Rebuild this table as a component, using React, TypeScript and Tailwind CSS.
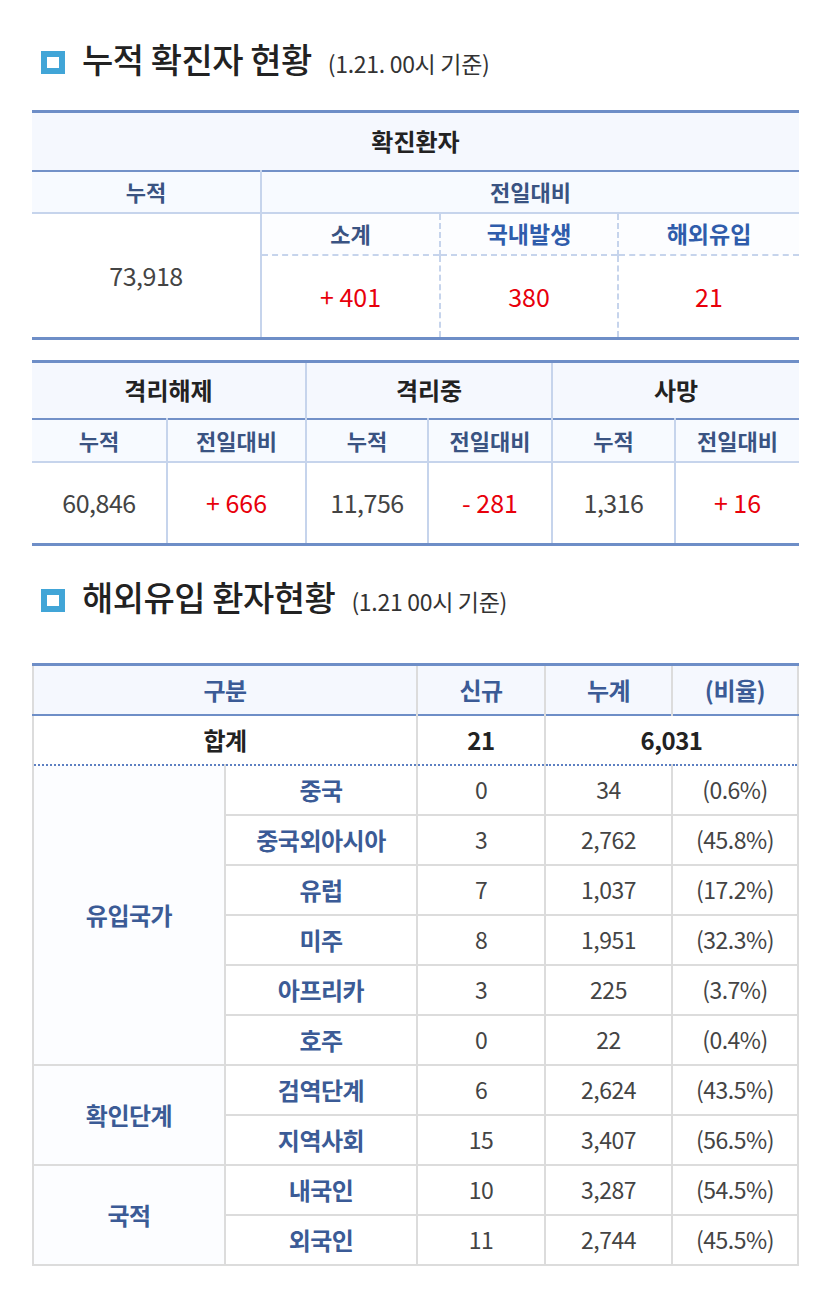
const font = { fontFamily: '"Noto Sans CJK KR", "Noto Sans", sans-serif' }

function SectionTitle({ title, note }: { title: string; note: string }) {
  return (
    <div className="flex h-[48px] items-center">
      <span className="ml-[9px] box-border h-[23px] w-[24px] border-[6px] border-[#41a5d7] bg-white" />
      <div className="ml-[17px] flex items-baseline pb-[8px]">
        <h2 className="text-[34px] font-medium tracking-[-0.5px] text-[#222]">{title}</h2>
        <span className="ml-[16px] text-[23px] tracking-[-0.3px] text-[#333]">{note}</span>
      </div>
    </div>
  )
}

const importRows = [
  { group: "유입국가", span: 6, label: "중국", n: "0", total: "34", rate: "(0.6%)" },
  { label: "중국외아시아", n: "3", total: "2,762", rate: "(45.8%)" },
  { label: "유럽", n: "7", total: "1,037", rate: "(17.2%)" },
  { label: "미주", n: "8", total: "1,951", rate: "(32.3%)" },
  { label: "아프리카", n: "3", total: "225", rate: "(3.7%)" },
  { label: "호주", n: "0", total: "22", rate: "(0.4%)" },
  { group: "확인단계", span: 2, label: "검역단계", n: "6", total: "2,624", rate: "(43.5%)" },
  { label: "지역사회", n: "15", total: "3,407", rate: "(56.5%)" },
  { group: "국적", span: 2, label: "내국인", n: "10", total: "3,287", rate: "(54.5%)" },
  { label: "외국인", n: "11", total: "2,744", rate: "(45.5%)" },
]

export default function App() {
  const subHead = "text-[22px] font-bold text-[#3a5382]"
  const value = "text-[25px] text-[#444] tracking-[-0.5px]"
  const red = "text-[25px] text-[#e8000b]"
  const grayLine = "border-[#dcdcdc]"
  const label = "text-[24px] font-bold tracking-[-0.5px] text-[#3b5b96]"
  const num = "text-[23px] tracking-[-0.5px] text-[#444]"

  return (
    <div style={font} className="min-h-screen bg-white pt-[38px] pb-[28px]">
      <div className="ml-[32px] w-[767px]">
        <SectionTitle title="누적 확진자 현황" note="(1.21. 00시 기준)" />

        <table className="mt-[24px] w-full table-fixed border-collapse border-y-[3px] border-[#6e8ec7] text-center">
          <colgroup>
            <col className="w-[229px]" />
            <col className="w-[179px]" />
            <col className="w-[178px]" />
            <col />
          </colgroup>
          <tbody>
            <tr className="h-[59px] bg-[#f5f8fe]">
              <th colSpan={4} className="text-[24px] font-bold text-[#222]">확진환자</th>
            </tr>
            <tr className="h-[42px] border-t-2 border-[#7391c8] bg-[#f7faff]">
              <th className={`border-r-2 border-[#c6d4ec] ${subHead}`}>누적</th>
              <th colSpan={3} className={subHead}>전일대비</th>
            </tr>
            <tr className="h-[42px] border-t-2 border-[#c6d4ec] bg-[#fcfdff]">
              <td rowSpan={2} className={`border-r-2 border-[#c6d4ec] bg-white ${value}`}>
                73,918
              </td>
              <th className={subHead}>소계</th>
              <th className="border-l-2 border-dashed border-[#c6d4ec] text-[23px] font-bold text-[#2f5cab]">
                국내발생
              </th>
              <th className="border-l-2 border-dashed border-[#c6d4ec] text-[23px] font-bold text-[#2f5cab]">
                해외유입
              </th>
            </tr>
            <tr className="h-[84px] border-t-2 border-dashed border-[#c6d4ec]">
              <td className={red}>+ 401</td>
              <td className={`border-l-2 border-dashed border-[#c6d4ec] ${red}`}>380</td>
              <td className={`border-l-2 border-dashed border-[#c6d4ec] ${red}`}>21</td>
            </tr>
          </tbody>
        </table>

        <table className="mt-[20px] w-full table-fixed border-collapse border-y-[3px] border-[#6e8ec7] text-center">
          <colgroup>
            <col className="w-[135px]" />
            <col className="w-[139px]" />
            <col className="w-[122px]" />
            <col className="w-[124px]" />
            <col className="w-[123px]" />
            <col />
          </colgroup>
          <tbody>
            <tr className="h-[57px] bg-[#f5f8fe] text-[24px] font-bold text-[#222]">
              <th colSpan={2} className="border-r-2 border-[#c6d4ec]">격리해제</th>
              <th colSpan={2} className="border-r-2 border-[#c6d4ec]">격리중</th>
              <th colSpan={2}>사망</th>
            </tr>
            <tr className="h-[43px] border-t-2 border-[#7391c8] bg-[#f7faff]">
              {["누적", "전일대비", "누적", "전일대비", "누적", "전일대비"].map((t, i) => (
                <th key={i} className={`${i < 5 ? "border-r-2" : ""} border-[#c6d4ec] ${subHead}`}>
                  {t}
                </th>
              ))}
            </tr>
            <tr className="h-[83px] border-t-2 border-[#c6d4ec]">
              <td className={`border-r-2 border-[#c6d4ec] ${value}`}>60,846</td>
              <td className={`border-r-2 border-[#c6d4ec] ${red}`}>+ 666</td>
              <td className={`border-r-2 border-[#c6d4ec] ${value}`}>11,756</td>
              <td className={`border-r-2 border-[#c6d4ec] ${red}`}>- 281</td>
              <td className={`border-r-2 border-[#c6d4ec] ${value}`}>1,316</td>
              <td className={red}>+ 16</td>
            </tr>
          </tbody>
        </table>

        <div className="mt-[30px]">
          <SectionTitle title="해외유입 환자현황" note="(1.21 00시 기준)" />
        </div>

        <table
          className={`mt-[39px] w-full table-fixed border-collapse border-x-2 border-b-2 ${grayLine} text-center`}
        >
          <colgroup>
            <col className="w-[192px]" />
            <col className="w-[192px]" />
            <col className="w-[128px]" />
            <col className="w-[127px]" />
            <col />
          </colgroup>
          <thead>
            <tr className="h-[50px] border-t-[3px] border-b-2 border-[#6e8ec7] bg-[#f5f8fe]">
              <th colSpan={2} className={`border-r-2 ${grayLine} ${label}`}>구분</th>
              <th className={`border-r-2 ${grayLine} ${label}`}>신규</th>
              <th className={`border-r-2 ${grayLine} ${label}`}>누계</th>
              <th className={label}>(비율)</th>
            </tr>
          </thead>
          <tbody>
            <tr className="h-[50px] border-b-2 border-dotted border-[#5d80c2] text-[24px] font-bold tracking-[-0.5px] text-[#222]">
              <td colSpan={2} className={`border-r-2 ${grayLine}`}>합계</td>
              <td className={`border-r-2 ${grayLine}`}>21</td>
              <td colSpan={2}>6,031</td>
            </tr>
            {importRows.map((r) => (
              <tr key={r.label} className={`h-[50px] border-b-2 ${grayLine}`}>
                {r.group && (
                  <th rowSpan={r.span} className={`border-r-2 ${grayLine} bg-[#fcfdff] ${label}`}>
                    {r.group}
                  </th>
                )}
                <th className={`border-r-2 ${grayLine} ${label}`}>{r.label}</th>
                <td className={`border-r-2 ${grayLine} ${num}`}>{r.n}</td>
                <td className={`border-r-2 ${grayLine} ${num}`}>{r.total}</td>
                <td className={num}>{r.rate}</td>
              </tr>
            ))}
          </tbody>
        </table>
      </div>
    </div>
  )
}
